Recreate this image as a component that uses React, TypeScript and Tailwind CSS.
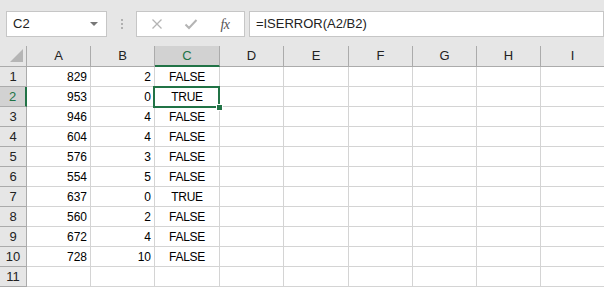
import React from 'react';

const cols = ['A', 'B', 'C', 'D', 'E', 'F', 'G', 'H', 'I'];

const data: [number, number, string][] = [
  [829, 2, 'FALSE'],
  [953, 0, 'TRUE'],
  [946, 4, 'FALSE'],
  [604, 4, 'FALSE'],
  [576, 3, 'FALSE'],
  [554, 5, 'FALSE'],
  [637, 0, 'TRUE'],
  [560, 2, 'FALSE'],
  [672, 4, 'FALSE'],
  [728, 10, 'FALSE'],
];

export default function App() {
  const rows = Array.from({ length: 11 }, (_, i) => i + 1);

  return (
    <div className="w-[604px] h-[287px] overflow-hidden bg-[#e6e6e6] font-['Liberation_Sans',Arial,sans-serif] text-black">
      {/* Formula bar */}
      <div className="h-[46px] flex items-start pt-[11px] pl-[6px]">
        <div className="w-[102px] h-[26px] bg-white border border-[#c6c6c6] flex items-center justify-between pl-[6px] pr-[8px]">
          <span className="text-[13px] text-[#222]">C2</span>
          <span className="w-0 h-0 border-l-[4px] border-r-[4px] border-t-[4px] border-l-transparent border-r-transparent border-t-[#777]"></span>
        </div>
        <div className="w-[30px] h-[26px] flex flex-col items-center justify-center gap-[2px]">
          <span className="w-[2px] h-[2px] bg-[#b0b0b0]"></span>
          <span className="w-[2px] h-[2px] bg-[#b0b0b0]"></span>
          <span className="w-[2px] h-[2px] bg-[#b0b0b0]"></span>
        </div>
        <div className="w-[110px] h-[26px] bg-white border border-[#c6c6c6] flex items-center">
          <svg width="12" height="12" viewBox="0 0 12 12" className="ml-[14px]">
            <path d="M1.5 1.5 L10.5 10.5 M10.5 1.5 L1.5 10.5" stroke="#b4b4b4" strokeWidth="1.3" fill="none" />
          </svg>
          <svg width="14" height="12" viewBox="0 0 14 12" className="ml-[21px]">
            <path d="M1.5 6.5 L5 10 L12.5 2" stroke="#b4b4b4" strokeWidth="2" fill="none" />
          </svg>
          <span className="ml-[22px] text-[14px] italic text-[#555] font-['Liberation_Serif',serif] tracking-[-0.5px]">fx</span>
        </div>
        <div className="ml-[4px] w-[360px] h-[26px] bg-white border border-[#c6c6c6] flex items-center pl-[6px]">
          <span className="text-[13px] text-[#222]">=ISERROR(A2/B2)</span>
        </div>
      </div>

      {/* Grid */}
      <div className="relative">
        <div className="grid grid-cols-[27px_64px_64px_65px_64px_65px_64px_64px_64px_64px] w-[605px]">
          {/* header row */}
          <div className="h-[21px] border-r border-b border-[#ababab] relative">
            <svg width="14" height="14" viewBox="0 0 14 14" className="absolute right-[2px] bottom-[3px]">
              <path d="M13 0 L13 13 L0 13 Z" fill="#b5b5b5" />
            </svg>
          </div>
          {cols.map((c) =>
            c === 'C' ? (
              <div
                key={c}
                className="h-[21px] bg-[#d2d2d2] border-r border-[#ababab] border-b-2 border-b-[#217346] flex items-center justify-center text-[13px] text-[#217346]"
              >
                {c}
              </div>
            ) : (
              <div
                key={c}
                className="h-[21px] border-r border-b border-[#ababab] flex items-center justify-center text-[13px] text-[#222]"
              >
                {c}
              </div>
            )
          )}

          {rows.map((r) => {
            const d = data[r - 1];
            const sel = r === 2;
            return (
              <React.Fragment key={r}>
                <div
                  className={
                    sel
                      ? 'h-[20px] bg-[#d2d2d2] border-b border-[#ababab] border-r-2 border-r-[#217346] flex items-center justify-center text-[13px] text-[#217346]'
                      : 'h-[20px] border-r border-b border-[#ababab] flex items-center justify-center text-[13px] text-[#222]'
                  }
                >
                  {r}
                </div>
                <div className="h-[20px] bg-white border-r border-b border-[#d4d4d4] flex items-center justify-end pr-[3px] text-[12px]">
                  {d ? d[0] : ''}
                </div>
                <div className="h-[20px] bg-white border-r border-b border-[#d4d4d4] flex items-center justify-end pr-[3px] text-[12px]">
                  {d ? d[1] : ''}
                </div>
                <div className="h-[20px] bg-white border-r border-b border-[#d4d4d4] flex items-center justify-center text-[12px] tracking-[-0.3px]">
                  {d ? d[2] : ''}
                </div>
                {cols.slice(3).map((c) => (
                  <div key={c} className="h-[20px] bg-white border-r border-b border-[#d4d4d4]"></div>
                ))}
              </React.Fragment>
            );
          })}
        </div>

        {/* selection outline on C2 */}
        <div className="absolute left-[153px] top-[40px] w-[67px] h-[22px] border-2 border-[#217346] pointer-events-none"></div>
        <div className="absolute left-[216px] top-[58px] w-[7px] h-[7px] bg-[#217346] border border-white"></div>
      </div>
    </div>
  );
}
